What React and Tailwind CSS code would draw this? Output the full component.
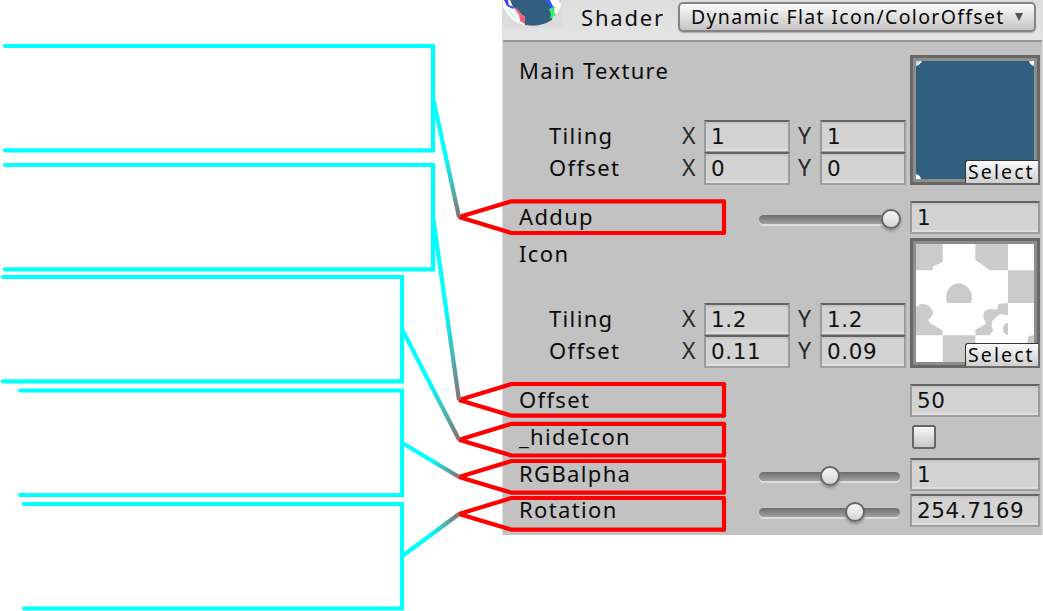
import React from "react";

const LABEL =
  "font-['Noto_Sans',sans-serif] text-[22px] leading-[30px] tracking-[1.35px] text-[#0c0c0c] whitespace-nowrap";

const AXIS =
  "font-['Noto_Sans',sans-serif] text-[23px] leading-[30px] text-[#2a2a2a] whitespace-nowrap";

function Field({ value, className }) {
  return (
    <div
      className={`h-[33px] shrink-0 border-2 border-t-[#636363] border-x-[#9b9b9b] border-b-[#9f9f9f] bg-[#d3d3d3] pl-[5px] font-['DejaVu_Sans',sans-serif] text-[21.5px] leading-[30px] tracking-[0.6px] text-[#111] shadow-[inset_0_-2px_0_#dfdfdf,inset_0_2px_1px_#c6c6c6] ${className}`}
    >
      {value}
    </div>
  );
}

function VectorRow({ label, x, y }) {
  return (
    <div className="flex">
      <div className={`w-[163px] pl-[30px] ${LABEL}`}>{label}</div>
      <div className={`w-[22px] ${AXIS}`}>X</div>
      <Field value={x} className="w-[86px]" />
      <div className={`w-[30px] pl-2 ${AXIS}`}>Y</div>
      <Field value={y} className="w-[86px]" />
    </div>
  );
}

function TextureSlot({ children }) {
  return (
    <div className="relative h-[130px] w-[130px] shrink-0 border-[3px] border-[#686868] bg-[#8d8d8d] p-[3px]">
      {children}
      <div className="absolute right-[-1px] bottom-[-1px] h-[23px] w-[73px] rounded-tl-[3px] border-t border-l border-[#333] bg-gradient-to-b from-[#fafafa] to-[#cfcfcf] pl-[2px] font-['Noto_Sans',sans-serif] text-[19.5px] leading-[22px] tracking-[2.1px] text-[#080808]">
        Select
      </div>
    </div>
  );
}

function MainTexture() {
  return (
    <svg viewBox="0 0 118 118" className="block h-[118px] w-[118px]">
      <path d="M0 0H118V118H0Z" fill="#fff" />
      <path d="M6 0H113Q114 4 118 5V118H5Q4 114 0 113V5Q4 4 6 0Z" fill="#315f80" />
      <path d="M0 0H5L0 5Z" fill="#d4d4d4" />
    </svg>
  );
}

function GearTexture() {
  return (
    <svg viewBox="0 0 354 354" className="block h-[118px] w-[118px]">
      <path d="M0 0H354V354H0Z" fill="#fff" />
      <g fill="#cbcbcb">
        <path d="M0 0H80V54L50 68V79H0Z" />
        <path d="M178 0H276V79H222L178 48Z" />
        <path d="M276 79H354V177H276Z" />
        <path d="M94 177Q84 150 102 130Q128 106 155 130Q174 150 165 177Z" />
        <path d="M0 188Q8 187 12 180Q38 180 42 190L51 202Q52 216 36 228L42 238L80 259V274H0Z" />
        <path d="M276 177V212Q268 216 260 211L248 212L238 222L228 232L227 248L232 258L220 274H178V258L211 239L201 219L206 200L224 194L242 197L248 180Z" />
        <path d="M276 236Q256 240 262 264Q267 273 276 274Z" />
        <path d="M80 274H178V354H80Z" />
        <path d="M354 274V354H322L338 276Z" />
      </g>
    </svg>
  );
}

function Slider({ value }) {
  return (
    <div className="relative h-[9px] w-[141px] rounded-full bg-gradient-to-b from-[#6d6d6d] to-[#a3a3a3] shadow-[0_2px_0_#dedede]">
      <div
        className="absolute top-[-6px] h-5 w-5 -translate-x-1/2 rounded-full border-2 border-[#666] bg-gradient-to-b from-[#f7f7f7] to-[#d5d5d5] shadow-[0_2px_3px_#888]"
        style={{ left: value }}
      />
    </div>
  );
}

function Row({ label, slider, children }) {
  return (
    <div className="flex h-[33px]">
      <div className={`w-[240px] ${LABEL}`}>{label}</div>
      <div className="w-[151px] pt-[14px]">{slider}</div>
      {children}
    </div>
  );
}

function MaterialBall() {
  return (
    <svg viewBox="0 0 60 28" className="h-7 w-[60px] shrink-0">
      <path d="M0 0H60V28H0Z" fill="#dcdcdc" />
      <circle cx="29" cy="-5" r="31" fill="#fff" />
      <path d="M7 0H47L51 9L49 20Q36 28 22 25Q20 16 8 8Z" fill="#315f80" />
      <path d="M1 0H7L10 7L15 10L18 14L22 17V24Q8 19 1 5Z" fill="#fff" />
      <path d="M1 0H5L6 5L11 7L10 9L4 6Z" fill="#4a3cff" />
      <path d="M10 7L15 10L18 14L22 17V24L17 21L16 15Z" fill="#f55d7c" />
      <path d="M3 8L7 10L10 15L16 21L10 17Z" fill="#b8f5ef" />
      <path d="M42 0H46L49 5L52 8L48 10L46 5Z" fill="#35f" />
      <path d="M46 9L53 6L50 10L53 15L47 19L48 14Z" fill="#3cf06a" />
      <path d="M56 0H60L57 4Z" fill="#f5c0f5" />
    </svg>
  );
}

const TAGS = [
  { x: 5, top: 46, bottom: 150.3, right: 433, tip: 217, box: 201.3 },
  { x: 5, top: 165, bottom: 269.3, right: 433, tip: 400, box: 384 },
  { x: 3, top: 277, bottom: 381.3, right: 402, tip: 439.7, box: 423.8 },
  { x: 20, top: 390.5, bottom: 495, right: 402, tip: 477, box: 461 },
  { x: 24, top: 504, bottom: 608.5, right: 402, tip: 514, box: 498 },
];

function Annotations() {
  return (
    <svg viewBox="0 0 1043 611" className="pointer-events-none absolute top-0 left-0 h-[611px] w-[1043px]">
      {TAGS.map((t, i) => {
        const mid = (t.top + t.bottom) / 2;
        return (
          <g key={i} fill="none" strokeWidth="4.2">
            <linearGradient id={`fade${i}`} gradientUnits="userSpaceOnUse" x1={t.right} y1={mid} x2="459" y2={t.tip}>
              <stop offset="0.5" stopColor="#00ffff" />
              <stop offset="1" stopColor="#8a6e6e" />
            </linearGradient>
            <path d={`M${t.x} ${t.top}H${t.right}V${t.bottom}H${t.x}`} stroke="#00ffff" strokeLinecap="round" />
            <path d={`M459 ${t.tip}L511.5 ${t.box}H724V${t.box + 31.7}H511.5Z`} stroke="#ff0000" strokeLinejoin="bevel" />
            <path d={`M724 ${t.box}h.01M724 ${t.box + 31.7}h.01`} stroke="#ff0000" strokeLinecap="round" />
            <path d={`M${t.right} ${mid}L459 ${t.tip}`} stroke={`url(#fade${i})`} />
          </g>
        );
      })}
    </svg>
  );
}

export default function App() {
  return (
    <div className="relative flex h-[611px] w-[1043px] justify-end overflow-hidden bg-white">
      <section className="h-[535px] w-[541px] border-x border-[#dedede] bg-[#c2c2c2]">
        <header className="flex h-[42px] items-start border-b-2 border-[#999] bg-gradient-to-b from-[#dedede] to-[#e4e4e4]">
          <MaterialBall />
          <div className="w-[115px] pt-px pl-[18px] font-['Noto_Sans',sans-serif] text-[22px] leading-[32px] tracking-[1.8px] text-[#111]">
            Shader
          </div>
          <div className="mt-[2px] flex h-[30px] w-[358px] items-center justify-between rounded-[5px] border-2 border-[#858585] bg-gradient-to-b from-[#fcfcfc] to-[#c6c4c5] pr-[11px] pl-[11px] font-['Noto_Sans',sans-serif] text-[19.5px] leading-[26px] tracking-[1.33px] whitespace-nowrap text-[#080808] shadow-[0_1px_1px_#aaa]">
            <span>Dynamic Flat Icon/ColorOffset</span>
            <svg viewBox="0 0 8 8" className="h-2 w-2 shrink-0">
              <path d="M0 0H8L4 8Z" fill="#555" />
            </svg>
          </div>
        </header>

        <div className="flex flex-col gap-[4px] pt-[13px] pl-4">
          <div className="mb-3 flex justify-between pr-[2px]">
            <div>
              <div className={`h-[65px] ${LABEL}`}>Main Texture</div>
              <VectorRow label="Tiling" x="1" y="1" />
              <div className="-mt-px">
                <VectorRow label="Offset" x="0" y="0" />
              </div>
            </div>
            <TextureSlot>
              <MainTexture />
            </TextureSlot>
          </div>
          <Row label="Addup" slider={<Slider value={132} />}>
            <Field value="1" className="w-[130px]" />
          </Row>
          <div className="mb-3 flex justify-between pr-[2px]">
            <div>
              <div className={`h-[65px] ${LABEL}`}>Icon</div>
              <VectorRow label="Tiling" x="1.2" y="1.2" />
              <div className="-mt-px">
                <VectorRow label="Offset" x="0.11" y="0.09" />
              </div>
            </div>
            <TextureSlot>
              <GearTexture />
            </TextureSlot>
          </div>
          <Row label="Offset">
            <Field value="50" className="w-[130px]" />
          </Row>
          <Row label="_hideIcon">
            <div className="mt-[4px] ml-[2px] h-6 w-6 rounded-[3px] border-2 border-[#666] bg-gradient-to-b from-[#f8f8f8] to-[#c9c7c8]" />
          </Row>
          <Row label="RGBalpha" slider={<Slider value={71} />}>
            <Field value="1" className="w-[130px]" />
          </Row>
          <div className="-mt-px">
            <Row label="Rotation" slider={<Slider value={96} />}>
              <Field value="254.7169" className="w-[130px]" />
            </Row>
          </div>
        </div>
      </section>
      <Annotations />
    </div>
  );
}
